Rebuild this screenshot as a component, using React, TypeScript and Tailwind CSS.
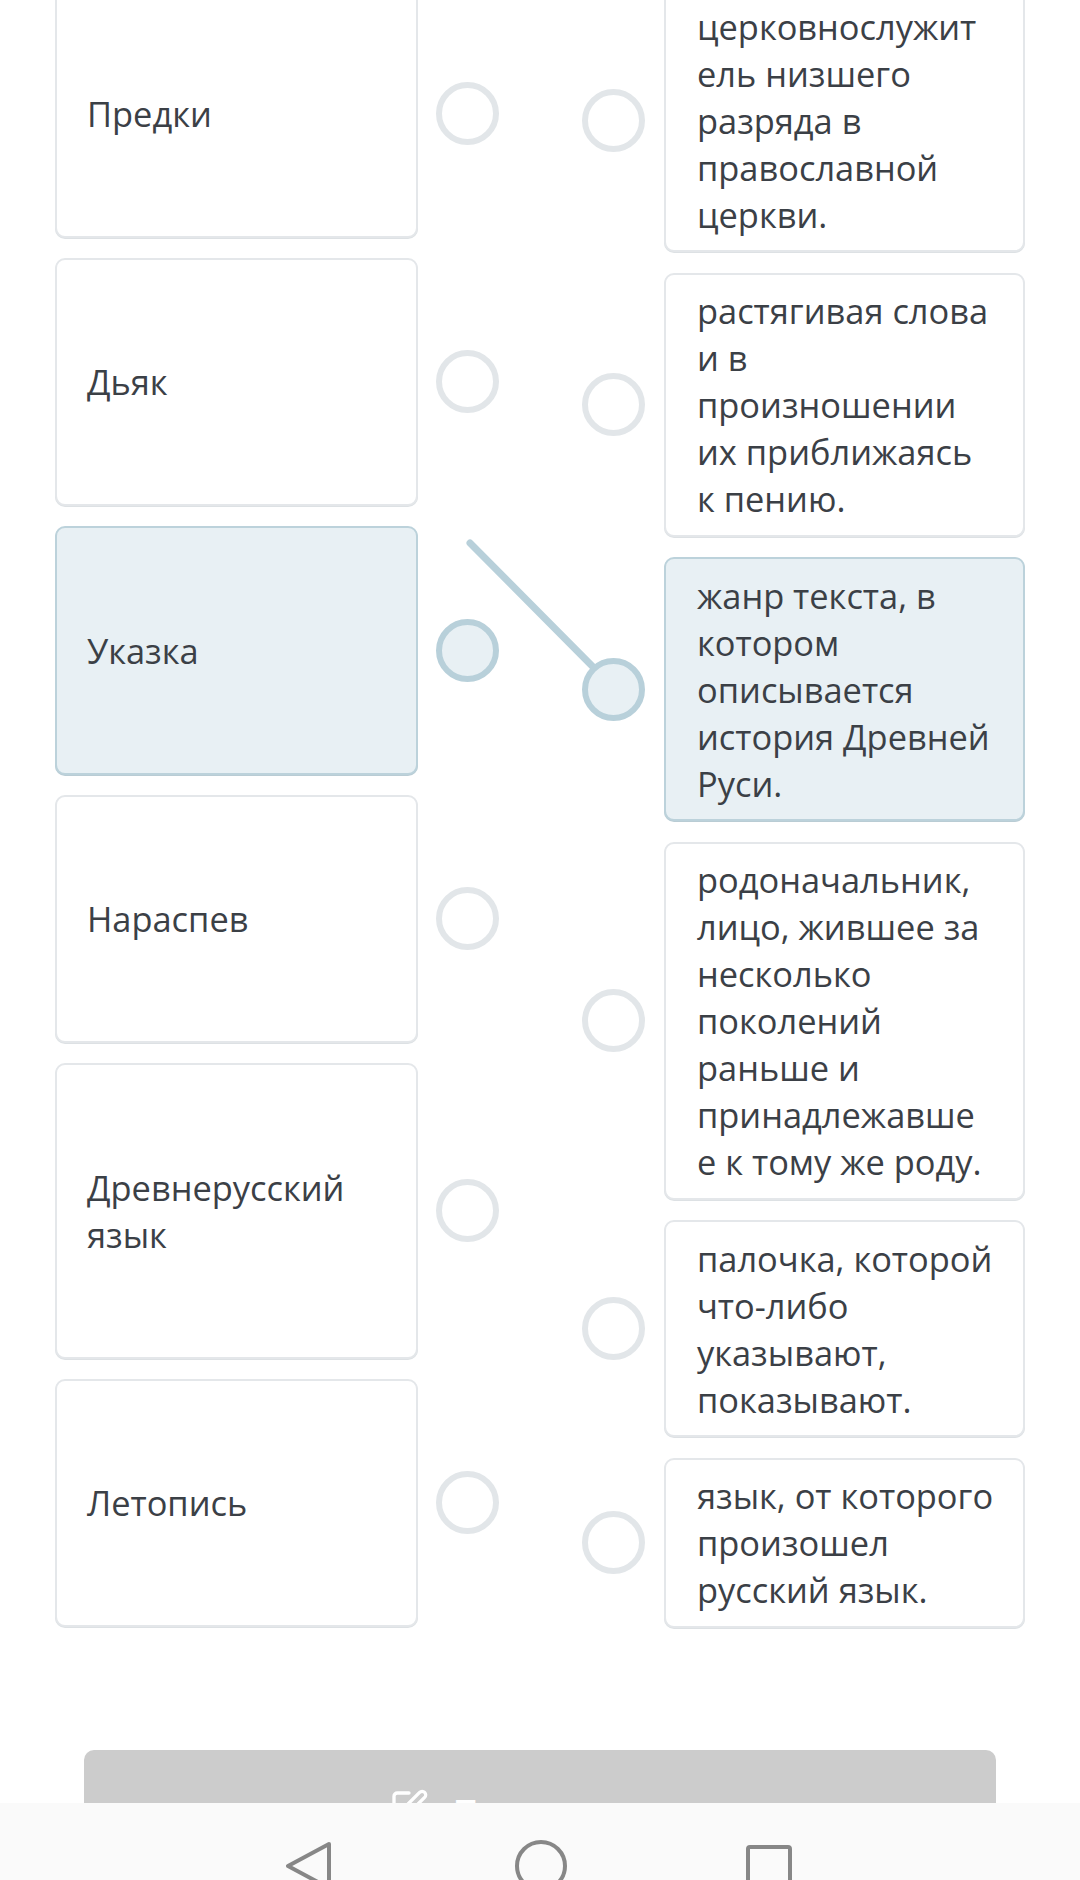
import React from "react";

type L = { lines: string[]; selected?: boolean };

const leftItems: L[] = [
  { lines: ["Предки"] },
  { lines: ["Дьяк"] },
  { lines: ["Указка"], selected: true },
  { lines: ["Нараспев"] },
  { lines: ["Древнерусский", "язык"] },
  { lines: ["Летопись"] },
];

const rightItems: L[] = [
  { lines: ["церковнослужит", "ель низшего", "разряда в", "православной", "церкви."] },
  { lines: ["растягивая слова", "и в", "произношении", "их приближаясь", "к пению."] },
  { lines: ["жанр текста, в", "котором", "описывается", "история Древней", "Руси."], selected: true },
  { lines: ["родоначальник,", "лицо, жившее за", "несколько", "поколений", "раньше и", "принадлежавше", "е к тому же роду."] },
  { lines: ["палочка, которой", "что-либо", "указывают,", "показывают."] },
  { lines: ["язык, от которого", "произошел", "русский язык."] },
];

function Circle({ selected }: { selected?: boolean }) {
  return (
    <div
      className={
        selected
          ? "w-[63px] h-[63px] shrink-0 rounded-full border-[6px] border-[#b8d0da] bg-[#e8f0f4]"
          : "w-[63px] h-[63px] shrink-0 rounded-full border-[6px] border-[#e2e6e9] bg-white"
      }
    />
  );
}

function Lines({ lines }: { lines: string[] }) {
  return (
    <div className="text-[34.4px] leading-[47px] text-[#3b4046]">
      {lines.map((l, i) => (
        <span key={i} className="block whitespace-nowrap">
          {l}
        </span>
      ))}
    </div>
  );
}

export default function App() {
  return (
    <div
      className="relative w-[1080px] h-[1880px] overflow-hidden bg-white flex flex-col"
      style={{ fontFamily: '"Open Sans", "Noto Sans", sans-serif' }}
    >
      <svg className="absolute left-0 top-0" width="1080" height="900">
        <line x1="470" y1="543" x2="606" y2="680" stroke="#b8d0da" strokeWidth="7" strokeLinecap="round" />
      </svg>

      <div className="relative flex items-start px-[55px] -mt-[14px] gap-[83px]">
        <div className="flex flex-col gap-[20px] mt-[3px] w-[444px]">
          {leftItems.map((it, i) => (
            <div key={i} className="flex items-center gap-[18px]">
              <div
                className={
                  it.selected
                    ? "w-[363px] rounded-[10px] border-2 border-[#bcd2db] bg-[#e8f0f4] shadow-[0_1px_0_#b9ccd4] pl-[30px] pr-[10px] py-[98.75px]"
                    : "w-[363px] rounded-[10px] border-2 border-[#e4e7ea] bg-white shadow-[0_1px_0_#dde1e4] pl-[30px] pr-[10px] py-[98.75px]"
                }
              >
                <Lines lines={it.lines} />
              </div>
              <Circle selected={it.selected} />
            </div>
          ))}
        </div>

        <div className="flex flex-col gap-[20.5px] w-[443px] mt-[2px]">
          {rightItems.map((it, i) => (
            <div key={i} className="flex items-center gap-[19px]">
              <Circle selected={it.selected} />
              <div
                className={
                  it.selected
                    ? "w-[362px] rounded-[10px] border-2 border-[#bcd2db] bg-[#e8f0f4] shadow-[0_1px_0_#b9ccd4] pl-[31px] pr-[8px] py-[12.5px]"
                    : "w-[362px] rounded-[10px] border-2 border-[#e4e7ea] bg-white shadow-[0_1px_0_#dde1e4] pl-[31px] pr-[8px] py-[12.5px]"
                }
              >
                <Lines lines={it.lines} />
              </div>
            </div>
          ))}
        </div>
      </div>

      <div className="flex-1" />

      <div className="h-[53px] overflow-hidden px-[84px] shrink-0">
        <div className="h-[110px] rounded-[10px] bg-[#cccccc] flex items-start pt-[38px] pl-[305px] gap-[24px]">
          <svg width="40" height="40" viewBox="0 0 24 24" fill="none" stroke="white" strokeWidth="2" strokeLinecap="round" strokeLinejoin="round">
            <path d="M12 3H5a2 2 0 0 0-2 2v14a2 2 0 0 0 2 2h14a2 2 0 0 0 2-2v-7" />
            <path d="M18.375 2.625a1 1 0 0 1 3 3l-9.013 9.014a2 2 0 0 1-.853.505l-2.873.84a.5.5 0 0 1-.62-.62l.84-2.873a2 2 0 0 1 .506-.852z" />
          </svg>
          <span className="text-[34px] font-bold text-white leading-none mt-[6px]">Проверить</span>
        </div>
      </div>

      <div className="h-[77px] shrink-0 bg-[#fafafa] overflow-hidden flex items-start pt-[36px]">
        <svg className="ml-[284px] shrink-0" width="50" height="52" viewBox="0 0 50 52" fill="none" stroke="#878787" strokeWidth="4" strokeLinejoin="round">
          <path d="M45 5 L4 27 L45 49 Z" />
        </svg>
        <svg className="ml-[180px] shrink-0" width="54" height="54" viewBox="0 0 54 54" fill="none" stroke="#878787" strokeWidth="4">
          <circle cx="27" cy="27" r="24" />
        </svg>
        <svg className="ml-[176px] shrink-0" width="50" height="54" viewBox="0 0 50 54" fill="none" stroke="#878787" strokeWidth="4" strokeLinejoin="round">
          <rect x="4" y="8" width="42" height="44" rx="2" />
        </svg>
      </div>
    </div>
  );
}
